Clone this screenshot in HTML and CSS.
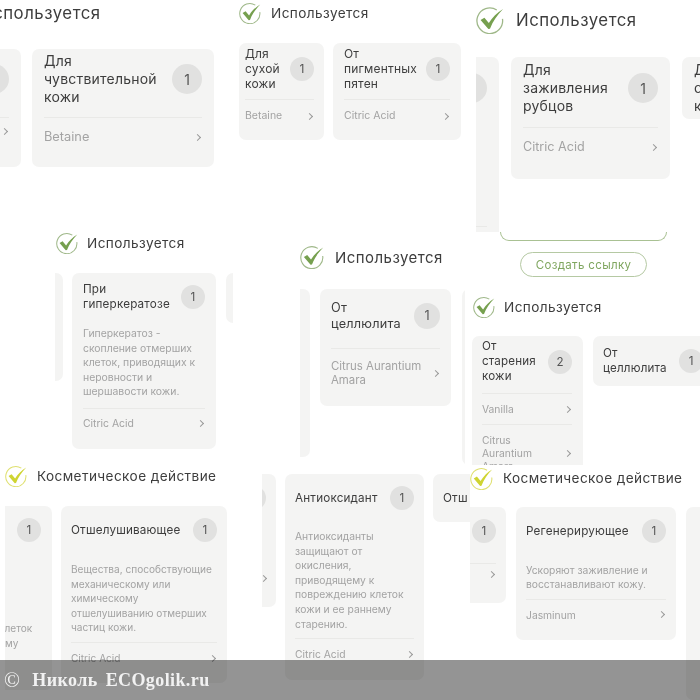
FILE: index.html
```html
<!DOCTYPE html>
<html lang="ru">
<head>
    <meta charset="UTF-8">
    <meta name="viewport" content="width=device-width, initial-scale=1.0">
    <title>Используется</title>
    <link rel="stylesheet" href="styles.css">
</head>
<body>

    <svg class="defs" width="0" height="0">
        <symbol id="check" viewBox="0 0 24 24">
            <path class="ring" d="M17.8 3.4A11 11 0 1 0 22.7 11"/>
            <path class="tick" d="M3.9 12 7.2 10 11 14.6C14 9.8 18 5.6 23.2 2.6 18.4 7.4 14.4 13.2 12 19.6L10.6 19.8Z"/>
        </symbol>
    </svg>

    <div class="canvas">

        <!-- Top left -->
        <section class="shot s1">
            <div class="head">
                <svg class="mark"><use href="#check"/></svg>
                <span>Используется</span>
            </div>
            <div class="row">
                <div class="card left-cut">
                    <div class="card-top"><span class="badge">1</span></div>
                    <div class="card-row"><span class="chev"></span></div>
                </div>
                <div class="card main">
                    <div class="card-top">
                        <span class="name">Для<br>чувствительной<br>кожи</span>
                        <span class="badge">1</span>
                    </div>
                    <div class="card-row"><span>Betaine</span><span class="chev"></span></div>
                </div>
            </div>
        </section>

        <!-- Top middle -->
        <section class="shot s2">
            <div class="head">
                <svg class="mark"><use href="#check"/></svg>
                <span>Используется</span>
            </div>
            <div class="row">
                <div class="card first">
                    <div class="card-top">
                        <span class="name">Для<br>сухой<br>кожи</span>
                        <span class="badge">1</span>
                    </div>
                    <div class="card-row"><span>Betaine</span><span class="chev"></span></div>
                </div>
                <div class="card second">
                    <div class="card-top">
                        <span class="name">От<br>пигментных<br>пятен</span>
                        <span class="badge">1</span>
                    </div>
                    <div class="card-row"><span>Citric Acid</span><span class="chev"></span></div>
                </div>
            </div>
        </section>

        <!-- Top right -->
        <section class="shot s3">
            <div class="head">
                <svg class="mark"><use href="#check"/></svg>
                <span>Используется</span>
            </div>
            <div class="row">
                <div class="card left-cut">
                    <div class="card-top"><span class="badge">1</span></div>
                    <div class="card-row tail"></div>
                </div>
                <div class="card main">
                    <div class="card-top">
                        <span class="name">Для<br>заживления<br>рубцов</span>
                        <span class="badge">1</span>
                    </div>
                    <div class="card-row"><span>Citric Acid</span><span class="chev"></span></div>
                </div>
                <div class="card side">
                    <div class="card-top">
                        <span class="name">Для<br>сухой<br>кожи</span>
                    </div>
                </div>
            </div>
        </section>

        <section class="shot links">
            <div class="frame-end"></div>
            <div class="link-btn">Создать ссылку</div>
        </section>

        <!-- Middle left -->
        <section class="shot s4">
            <div class="head">
                <svg class="mark"><use href="#check"/></svg>
                <span>Используется</span>
            </div>
            <div class="row">
                <div class="card left-cut"></div>
                <div class="card main">
                    <div class="card-top">
                        <span class="name">При<br>гиперкератозе</span>
                        <span class="badge">1</span>
                    </div>
                    <p class="text">Гиперкератоз -<br>скопление отмерших<br>клеток, приводящих к<br>неровности и<br>шершавости кожи.</p>
                    <div class="card-row"><span>Citric Acid</span><span class="chev"></span></div>
                </div>
                <div class="card side"></div>
            </div>
        </section>

        <!-- Middle -->
        <section class="shot s5">
            <div class="head">
                <svg class="mark"><use href="#check"/></svg>
                <span>Используется</span>
            </div>
            <div class="row">
                <div class="card left-cut"></div>
                <div class="card main">
                    <div class="card-top">
                        <span class="name">От<br>целлюлита</span>
                        <span class="badge">1</span>
                    </div>
                    <div class="card-row"><span>Citrus Aurantium<br>Amara</span><span class="chev"></span></div>
                </div>
                <div class="card side"></div>
            </div>
        </section>

        <!-- Middle right -->
        <section class="shot s6">
            <div class="head">
                <svg class="mark"><use href="#check"/></svg>
                <span>Используется</span>
            </div>
            <div class="row">
                <div class="card first">
                    <div class="card-top">
                        <span class="name">От<br>старения<br>кожи</span>
                        <span class="badge">2</span>
                    </div>
                    <div class="card-row"><span>Vanilla</span><span class="chev"></span></div>
                    <div class="card-row"><span>Citrus<br>Aurantium<br>Amara</span><span class="chev"></span></div>
                </div>
                <div class="card second">
                    <div class="card-top">
                        <span class="name">От<br>целлюлита</span>
                        <span class="badge">1</span>
                    </div>
                </div>
            </div>
        </section>

        <!-- Bottom left -->
        <section class="shot s7">
            <div class="head">
                <svg class="mark yellow"><use href="#check"/></svg>
                <span>Косметическое действие</span>
            </div>
            <div class="row">
                <div class="card left-cut">
                    <div class="card-top"><span class="badge">1</span></div>
                    <p class="text leftover"><span class="word-a">клеток</span><br>му</p>
                </div>
                <div class="card main">
                    <div class="card-top">
                        <span class="name">Отшелушивающее</span>
                        <span class="badge">1</span>
                    </div>
                    <p class="text">Вещества, способствующие<br>механическому или<br>химическому<br>отшелушиванию отмерших<br>частиц кожи.</p>
                    <div class="card-row"><span>Citric Acid</span><span class="chev"></span></div>
                </div>
            </div>
        </section>

        <!-- Bottom middle -->
        <section class="shot s8">
            <div class="row">
                <div class="card left-cut">
                    <div class="card-top"><span class="badge">1</span></div>
                    <div class="card-row"><span class="chev"></span></div>
                </div>
                <div class="card main">
                    <div class="card-top">
                        <span class="name">Антиоксидант</span>
                        <span class="badge">1</span>
                    </div>
                    <p class="text">Антиоксиданты<br>защищают от<br>окисления,<br>приводящему к<br>повреждению клеток<br>кожи и ее раннему<br>старению.</p>
                    <div class="card-row"><span>Citric Acid</span><span class="chev"></span></div>
                </div>
                <div class="card side">
                    <div class="card-top"><span class="name">Отш</span></div>
                </div>
            </div>
        </section>

        <!-- Bottom right -->
        <section class="shot s9">
            <div class="head">
                <svg class="mark yellow"><use href="#check"/></svg>
                <span>Косметическое действие</span>
            </div>
            <div class="row">
                <div class="card left-cut">
                    <div class="card-top"><span class="badge">1</span></div>
                    <div class="card-row"><span class="chev"></span></div>
                </div>
                <div class="card main">
                    <div class="card-top">
                        <span class="name">Регенерирующее</span>
                        <span class="badge">1</span>
                    </div>
                    <p class="text">Ускоряют заживление и<br>восстанавливают кожу.</p>
                    <div class="card-row"><span>Jasminum</span><span class="chev"></span></div>
                </div>
                <div class="card side"></div>
            </div>
        </section>

        <!-- Watermark -->
        <div class="watermark">
            <span class="copy">©</span>
            <span class="owner">Николь</span>
            <span class="site">ECOgolik.ru</span>
        </div>

    </div>

</body>
</html>
```

FILE: styles.css
```css
html, body {
    margin: 0;
    background-color: #ffffff;
}

.defs {
    position: absolute;
}

.canvas {
    position: relative;
    width: 700px;
    height: 700px;
    overflow: hidden;
    background-color: #ffffff;
    font-family: Inter, "Noto Sans", sans-serif;
    color: #3d3d3d;
    filter: blur(0.35px);
}

/* Each screenshot piece sits on the free canvas */
.shot {
    position: absolute;
    overflow: hidden;
    background-color: #ffffff;
    --head-h: 24px;
    --head-fs: 13.6px;
    --mark: 22px;
    --mark-gap: 10px;
    --row-top: 17px;
    --gap: 10px;
    --pad: 11px;
    --name-fs: 11.7px;
    --name-lh: 14.5px;
    --badge: 24px;
    --top-a: 12px;
    --top-b: 18px;
    --rest-fs: 10.3px;
    --rest-lh: 14.3px;
    --rest-pad: 8px;
    --text-pad: 7px;
}

.head {
    display: flex;
    align-items: center;
    gap: var(--mark-gap);
    height: var(--head-h);
    font-size: var(--head-fs);
    letter-spacing: 0.03em;
    white-space: nowrap;
}

.mark {
    flex: none;
    width: var(--mark);
    height: var(--mark);
    --ring: #9fb889;
    --tick: #76a04f;
}

.mark.yellow {
    --ring: #dfe070;
    --tick: #cfd432;
}

.ring {
    fill: none;
    stroke: var(--ring);
    stroke-width: 1.1;
}

.tick {
    fill: var(--tick);
}

.row {
    display: flex;
    align-items: flex-start;
    gap: var(--gap);
    margin-top: var(--row-top);
}

.card {
    flex: none;
    box-sizing: border-box;
    padding: 0 var(--pad);
    border-radius: 7px;
    background-color: #f4f4f3;
    overflow: hidden;
}

.left-cut {
    padding-left: 0;
    border-radius: 0 7px 7px 0;
}

.card-top {
    display: flex;
    align-items: center;
    justify-content: space-between;
    padding: var(--top-a) 0 var(--top-b);
}

.left-cut .card-top {
    justify-content: flex-end;
}

.name {
    font-size: var(--name-fs);
    line-height: var(--name-lh);
    letter-spacing: 0.015em;
    white-space: nowrap;
}

.badge {
    flex: none;
    display: flex;
    align-items: center;
    justify-content: center;
    width: var(--badge);
    height: var(--badge);
    border-radius: 50%;
    background-color: #e1e1e0;
    font-size: var(--name-fs);
    color: #555555;
}

.text {
    margin: 0;
    padding-bottom: var(--text-pad);
    font-size: var(--rest-fs);
    line-height: var(--rest-lh);
    color: #a3a3a3;
    white-space: nowrap;
}

.card-row {
    display: flex;
    align-items: center;
    justify-content: space-between;
    padding: var(--rest-pad) 0;
    border-top: 1px solid #e9e9e7;
    font-size: var(--rest-fs);
    line-height: var(--rest-lh);
    color: #a3a3a3;
    white-space: nowrap;
}

.left-cut .card-row {
    justify-content: flex-end;
}

.chev {
    flex: none;
    box-sizing: border-box;
    width: 5px;
    height: 5px;
    margin-right: 2px;
    border-top: 1px solid #999999;
    border-right: 1px solid #999999;
    transform: rotate(45deg);
}

/* Top left */
.s1 {
    left: 0;
    top: 0;
    width: 235px;
    height: 225px;
    --head-h: 26px;
    --head-fs: 16.8px;
    --mark: 28px;
    --mark-gap: 12px;
    --row-top: 23px;
    --gap: 11px;
    --pad: 12px;
    --name-fs: 14px;
    --name-lh: 18px;
    --badge: 30px;
    --top-a: 3px;
    --top-b: 11px;
    --rest-fs: 12.8px;
    --rest-lh: 16px;
    --rest-pad: 11px;
}

.s1 .head {
    margin-left: -60px;
}

.s1 .left-cut {
    width: 21px;
    height: 118px;
}

.s1 .left-cut .card-top,
.s3 .left-cut .card-top {
    min-height: 54px;
}

.s1 .main {
    width: 182px;
    height: 118px;
}

/* Top middle */
.s2 {
    left: 239px;
    top: 0;
    width: 230px;
    height: 150px;
    --head-h: 26px;
    --row-top: 17px;
    --gap: 9px;
    --name-fs: 12px;
    --name-lh: 15px;
    --top-a: 3px;
    --top-b: 8px;
    --rest-fs: 10.5px;
    --rest-pad: 9px;
}

.s2 .first {
    width: 85px;
    height: 97px;
    padding-left: 6px;
    padding-right: 10px;
}

.s2 .second {
    width: 128px;
    height: 97px;
}

/* Top right */
.s3 {
    left: 476px;
    top: 0;
    width: 224px;
    height: 232px;
    --head-h: 40px;
    --head-fs: 16.8px;
    --mark: 28px;
    --mark-gap: 12px;
    --row-top: 17px;
    --gap: 12px;
    --pad: 12px;
    --name-fs: 14px;
    --name-lh: 18px;
    --badge: 30px;
    --top-a: 4px;
    --top-b: 12px;
    --rest-fs: 12.6px;
    --rest-lh: 16px;
    --rest-pad: 11px;
}

.s3 .left-cut {
    width: 23px;
    height: 190px;
}

.s3 .tail {
    margin-top: 99px;
}

.s3 .main {
    width: 159px;
    height: 122px;
}

.s3 .side {
    width: 100px;
    height: 62px;
}

/* Tail of the frame and the link button under it */
.links {
    left: 500px;
    top: 232px;
    width: 167px;
    height: 46px;
    display: flex;
    flex-direction: column;
    align-items: center;
    background-color: transparent;
}

.frame-end {
    flex: none;
    box-sizing: border-box;
    align-self: stretch;
    height: 9px;
    border: 1px solid #a9c193;
    border-top: none;
    border-radius: 0 0 13px 13px;
}

.link-btn {
    flex: none;
    box-sizing: border-box;
    display: flex;
    align-items: center;
    justify-content: center;
    width: 127px;
    height: 25px;
    margin-top: 11px;
    border: 1px solid #b5c9a3;
    border-radius: 13px;
    font-size: 11.5px;
    letter-spacing: 0.03em;
    color: #7fa65f;
}

/* Middle left */
.s4 {
    left: 55px;
    top: 232px;
    width: 180px;
    height: 225px;
    --head-h: 22px;
    --mark-gap: 9px;
    --row-top: 19px;
    --gap: 9px;
    --top-a: 9px;
    --top-b: 16px;
    --rest-fs: 10.4px;
    --rest-lh: 14.5px;
    --text-pad: 8px;
}

.s4 .mark {
    margin-left: 1px;
}

.s4 .left-cut {
    width: 8px;
    height: 108px;
    padding: 0;
}

.s4 .main {
    width: 144px;
    height: 176px;
}

.s4 .side {
    width: 7px;
    height: 50px;
    margin-left: 1px;
    padding: 0;
    border-radius: 7px 0 0 7px;
}

/* Middle */
.s5 {
    left: 300px;
    top: 245px;
    width: 165px;
    height: 220px;
    --head-h: 24px;
    --head-fs: 15px;
    --mark: 24px;
    --mark-gap: 11px;
    --row-top: 20px;
    --name-fs: 12.7px;
    --name-lh: 15.5px;
    --badge: 26px;
    --top-a: 11px;
    --top-b: 17px;
    --rest-fs: 11.4px;
    --rest-pad: 10px;
}

.s5 .left-cut {
    width: 10px;
    height: 168px;
    padding: 0;
}

.s5 .main {
    width: 131px;
    height: 117px;
}

.s5 .side {
    width: 20px;
    height: 176px;
    margin-left: 1px;
    padding: 0;
}

/* Middle right */
.s6 {
    left: 472px;
    top: 295px;
    width: 228px;
    height: 170px;
    --mark-gap: 9px;
    --row-top: 17px;
    --name-fs: 11.6px;
    --name-lh: 15px;
    --top-a: 3px;
    --top-b: 9px;
    --rest-lh: 13px;
    --rest-pad: 8.5px;
}

.s6 .mark {
    margin-left: 1px;
}

.s6 .first {
    width: 111px;
    height: 140px;
    padding-left: 10px;
}

.s6 .second {
    width: 121px;
    height: 50px;
    padding-left: 10px;
    --top-a: 10px;
    --top-b: 10px;
}

/* Bottom left */
.s7 {
    left: 5px;
    top: 465px;
    width: 225px;
    height: 235px;
    --head-h: 22px;
    --row-top: 19px;
    --gap: 9px;
    --pad: 10px;
    --top-b: 20px;
    --rest-fs: 10.1px;
    --rest-lh: 14.6px;
}

.s7 .left-cut {
    width: 47px;
    height: 184px;
    --pad: 11px;
    padding-left: 0;
}

.leftover {
    margin-top: 59px;
}

.word-a {
    margin-left: -6px;
}

.s7 .main {
    width: 166px;
    height: 177px;
}

/* Bottom middle */
.s8 {
    left: 262px;
    top: 474px;
    width: 208px;
    height: 226px;
    --row-top: 0px;
    --gap: 9px;
    --pad: 10px;
    --top-b: 19px;
    --rest-lh: 14.6px;
}

.s8 .left-cut {
    width: 14px;
    height: 133px;
}

.s8 .left-cut .card-row {
    margin-top: 38px;
    border-top-color: transparent;
}

.s8 .left-cut .chev {
    margin-right: 0;
}

.s8 .main {
    width: 139px;
    height: 206px;
}

.s8 .side {
    width: 100px;
    height: 48px;
    --top-a: 17px;
    --top-b: 17px;
}

/* Bottom right */
.s9 {
    left: 470px;
    top: 465px;
    width: 230px;
    height: 235px;
    --head-h: 26px;
    --row-top: 16px;
    --pad: 10px;
    --mark: 23px;
    --top-a: 12px;
    --top-b: 20px;
}

.s9 .left-cut {
    width: 36px;
    height: 96px;
}

.s9 .main {
    width: 160px;
    height: 133px;
}

.s9 .side {
    width: 30px;
    height: 193px;
}

/* Watermark across the bottom */
.watermark {
    position: absolute;
    left: 0;
    right: 0;
    bottom: 0;
    height: 40px;
    display: flex;
    align-items: center;
    box-sizing: border-box;
    padding-left: 4px;
    background-color: rgba(0, 0, 0, 0.42);
    font-family: "Liberation Serif", serif;
    font-weight: bold;
    font-size: 18px;
    letter-spacing: 0.4px;
    color: #f2f2f2;
}

.copy {
    font-size: 21px;
    font-weight: normal;
    margin-right: 12px;
}

.owner {
    margin-right: 8px;
}
```
